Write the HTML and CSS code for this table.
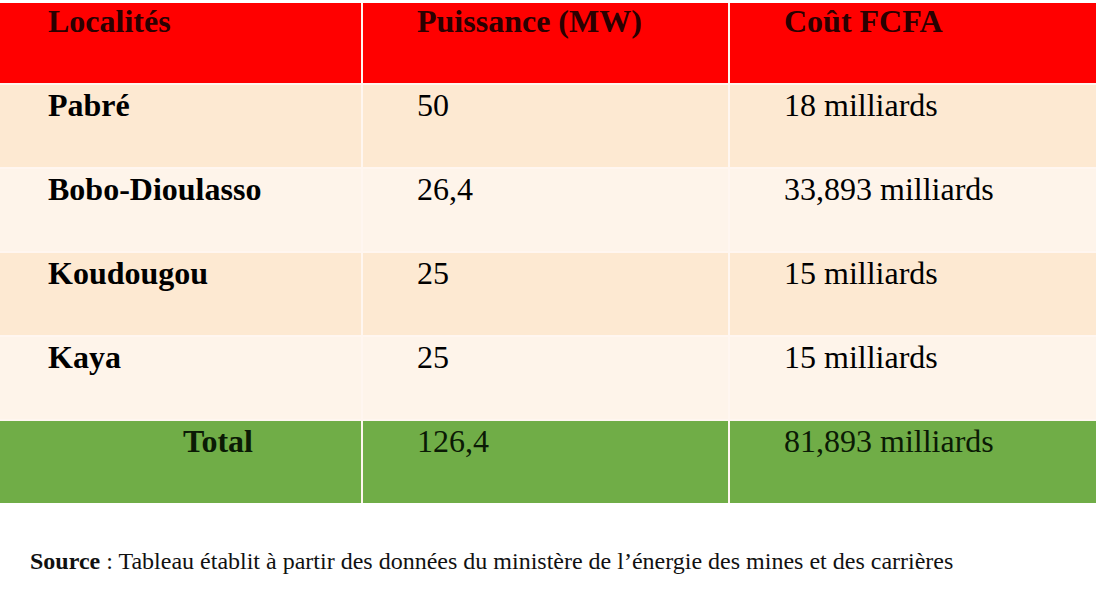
FILE: index.html
```html
<!DOCTYPE html>
<html lang="fr">
<head>
<meta charset="utf-8">
<title>Tableau</title>
<link rel="stylesheet" href="styles.css">
</head>
<body>
<div class="table">
  <div class="cell head c1">Localités</div>
  <div class="cell head">Puissance (MW)</div>
  <div class="cell head">Coût FCFA</div>

  <div class="cell odd c1 name">Pabré</div>
  <div class="cell odd">50</div>
  <div class="cell odd">18 milliards</div>

  <div class="cell even c1 name">Bobo-Dioulasso</div>
  <div class="cell even">26,4</div>
  <div class="cell even">33,893 milliards</div>

  <div class="cell odd c1 name">Koudougou</div>
  <div class="cell odd">25</div>
  <div class="cell odd">15 milliards</div>

  <div class="cell even c1 name">Kaya</div>
  <div class="cell even">25</div>
  <div class="cell even">15 milliards</div>

  <div class="cell total c1 name total-label">Total</div>
  <div class="cell total">126,4</div>
  <div class="cell total">81,893 milliards</div>
</div>
<p class="source"><b>Source</b> : Tableau établit à partir des données du ministère de l’énergie des mines et des carrières</p>
</body>
</html>
```

FILE: styles.css
```css
html, body {
  margin: 0;
  padding: 0;
  background: #ffffff;
}
body {
  font-family: "Liberation Serif", "Times New Roman", serif;
  color: #000;
  width: 1101px;
}
.table {
  margin-top: 3px;
  width: 1096px;
  display: grid;
  grid-template-columns: 361px 365px 366px;
  grid-template-rows: 80px 82px 82px 82px 82px 82px;
  column-gap: 2px;
  row-gap: 2px;
  background: #fff6f0;
}
.cell {
  font-size: 32px;
  line-height: 36px;
  padding: 2px 0 0 54px;
  box-sizing: border-box;
}
.cell.c1 {
  padding-left: 48px;
}
.head {
  background: #ff0000;
  color: #2a0000;
  font-weight: bold;
  padding-top: 0;
}
.name {
  font-weight: bold;
}
.odd {
  background: #fde9d2;
}
.even {
  background: #fef4ea;
}
.total {
  background: #70ad47;
  color: #0b1a05;
}
.cell.total-label {
  padding-left: 183px;
}
.source {
  margin: 44px 0 0 30px;
  font-size: 24px;
  line-height: 28px;
  color: #111;
}
```
